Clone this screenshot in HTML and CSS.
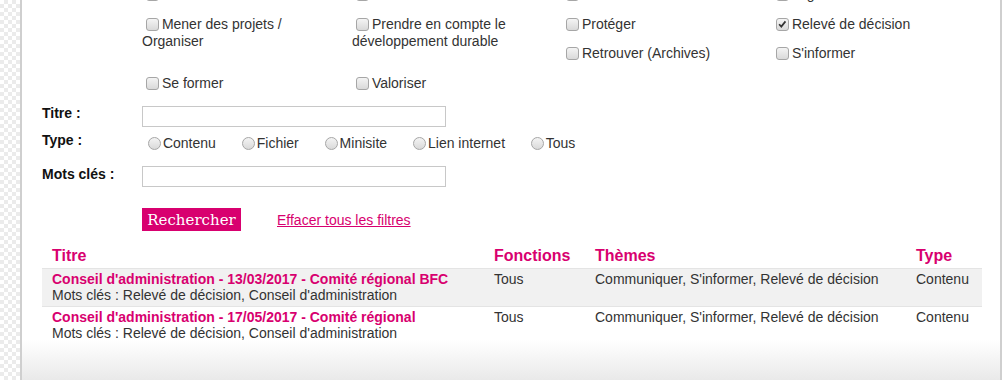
FILE: index.html
```html
<!DOCTYPE html>
<html lang="fr">
<head>
  <meta charset="UTF-8">
  <title>Recherche de documents</title>
  <link rel="stylesheet" href="styles.css">
</head>
<body>
  <div class="side"></div>
  <div class="panel">
    <div class="themes">
      <label><input type="checkbox"> Gérer</label>
      <label><input type="checkbox"> Gérer son association</label>
      <label><input type="checkbox"> Idées nouvelles</label>
      <label><input type="checkbox"> Juger</label>
      <label class="double"><input type="checkbox"> Mener des projets / Organiser</label>
      <label class="double"><input type="checkbox"> Prendre en compte le développement durable</label>
      <label><input type="checkbox"> Protéger</label>
      <label><input type="checkbox" checked> Relevé de décision</label>
      <label><input type="checkbox"> Retrouver (Archives)</label>
      <label><input type="checkbox"> S'informer</label>
      <label><input type="checkbox"> Se former</label>
      <label><input type="checkbox"> Valoriser</label>
    </div>

    <div class="field field-title">
      <span class="field-label">Titre :</span>
      <input type="text" class="text-input">
    </div>
    <div class="field field-type">
      <span class="field-label">Type :</span>
      <div class="radios">
        <label><input type="radio" name="type"> Contenu</label>
        <label><input type="radio" name="type"> Fichier</label>
        <label><input type="radio" name="type"> Minisite</label>
        <label><input type="radio" name="type"> Lien internet</label>
        <label><input type="radio" name="type"> Tous</label>
      </div>
    </div>
    <div class="field field-keys">
      <span class="field-label">Mots clés :</span>
      <input type="text" class="text-input">
    </div>

    <div class="actions">
      <button class="btn-search">Rechercher</button>
      <a href="#" class="reset">Effacer tous les filtres</a>
    </div>

    <table class="results">
      <thead>
        <tr>
          <th class="c-title">Titre</th>
          <th class="c-fn">Fonctions</th>
          <th class="c-theme">Thèmes</th>
          <th class="c-type">Type</th>
        </tr>
      </thead>
      <tbody>
        <tr class="odd">
          <td>
            <a href="#" class="doc">Conseil d'administration - 13/03/2017 - Comité régional BFC</a><br>
            Mots clés : Relevé de décision, Conseil d'administration
          </td>
          <td>Tous</td>
          <td>Communiquer, S'informer, Relevé de décision</td>
          <td>Contenu</td>
        </tr>
        <tr>
          <td>
            <a href="#" class="doc">Conseil d'administration - 17/05/2017 - Comité régional</a><br>
            Mots clés : Relevé de décision, Conseil d'administration
          </td>
          <td>Tous</td>
          <td>Communiquer, S'informer, Relevé de décision</td>
          <td>Contenu</td>
        </tr>
      </tbody>
    </table>
  </div>
</body>
</html>
```

FILE: styles.css
```css
html, body {
  margin: 0;
  padding: 0;
  height: 100%;
}
body {
  font-family: 'Liberation Sans', Arial, sans-serif;
  font-size: 14px;
  color: #333;
  display: flex;
  overflow: hidden;
  background: #fff;
}
.side {
  width: 20px;
  flex: none;
  background-color: #fff;
  background-image: conic-gradient(#ebebeb 25%, #fff 25% 50%, #ebebeb 50% 75%, #fff 75%);
  background-size: 8px 8px;
}
.panel {
  width: 982px;
  flex: none;
  border-left: 2px solid #cfcfcf;
  border-right: 2px solid #cfcfcf;
  padding: 0 18px 0 20px;
  box-sizing: border-box;
  background: linear-gradient(to bottom, #fff 340px, #e9e9e9 100%);
}

/* themes checkboxes */
.themes {
  display: grid;
  grid-template-columns: repeat(4, 210px);
  grid-auto-rows: 29.5px;
  margin: -14px 0 0 100px;
}
.themes label {
  line-height: 17px;
  padding-right: 40px;
}
.themes .double {
  grid-row: span 2;
}

input[type="checkbox"],
input[type="radio"] {
  -webkit-appearance: none;
  appearance: none;
  width: 13px;
  height: 13px;
  margin: 0 -1px 0 4px;
  border: 1px solid #a6a6a6;
  border-radius: 3px;
  background: linear-gradient(#f4f4f4, #d9d9d9);
  vertical-align: -2px;
  box-sizing: border-box;
}
input[type="radio"] {
  border-radius: 50%;
  margin: 0 -2px 0 6px;
}
input[type="checkbox"]:checked {
  background: url("data:image/svg+xml,%3Csvg xmlns='http://www.w3.org/2000/svg' viewBox='0 0 13 13'%3E%3Cpath d='M2.5 6.2l2.6 2.8L10 2.8' fill='none' stroke='%23333' stroke-width='2'/%3E%3C/svg%3E") center / 11px 11px no-repeat, linear-gradient(#f4f4f4, #d9d9d9);
}

/* form fields */
.field {
  display: flex;
  align-items: flex-start;
}
.field-label {
  width: 100px;
  flex: none;
  font-weight: bold;
  color: #111;
  line-height: 17px;
}
.text-input {
  width: 304px;
  height: 21px;
  border: 1px solid #c8c8c8;
  box-sizing: border-box;
  margin: 0;
  padding: 0 4px;
}
.field-title {
  margin-top: 2px;
}
.field-title .field-label {
  margin-top: -1px;
}
.field-type {
  margin-top: 5px;
}
.radios {
  display: flex;
  padding-top: 3px;
  line-height: 17px;
}
.radios label {
  margin-right: 20px;
}
.field-keys {
  margin-top: 14px;
}

.actions {
  display: flex;
  align-items: center;
  margin: 21px 0 0 100px;
}
.btn-search {
  background: #d8006f;
  color: #fff;
  border: none;
  font-family: 'DejaVu Serif', 'Liberation Serif', serif;
  font-size: 15px;
  height: 23px;
  width: 99px;
  padding: 0;
  cursor: pointer;
}
.reset {
  margin-left: 36px;
  color: #d8006f;
  font-size: 14px;
  padding-top: 1px;
}

/* results */
.results {
  width: 940px;
  border-collapse: collapse;
  margin-top: 13px;
}
.results th {
  text-align: left;
  color: #d8006f;
  font-size: 16px;
  padding: 2px 10px 2px;
  line-height: 20px;
}
.results td {
  vertical-align: top;
  padding: 2px 10px 3px;
  line-height: 16px;
  color: #333;
}
.results tbody tr {
  border-top: 1px solid #e4e4e4;
}
.results tr.odd {
  background: #f1f1f1;
}
.c-title { width: 422px; }
.c-fn { width: 81px; }
.c-theme { width: 301px; }
.doc {
  color: #d8006f;
  font-weight: bold;
  text-decoration: none;
}
```
